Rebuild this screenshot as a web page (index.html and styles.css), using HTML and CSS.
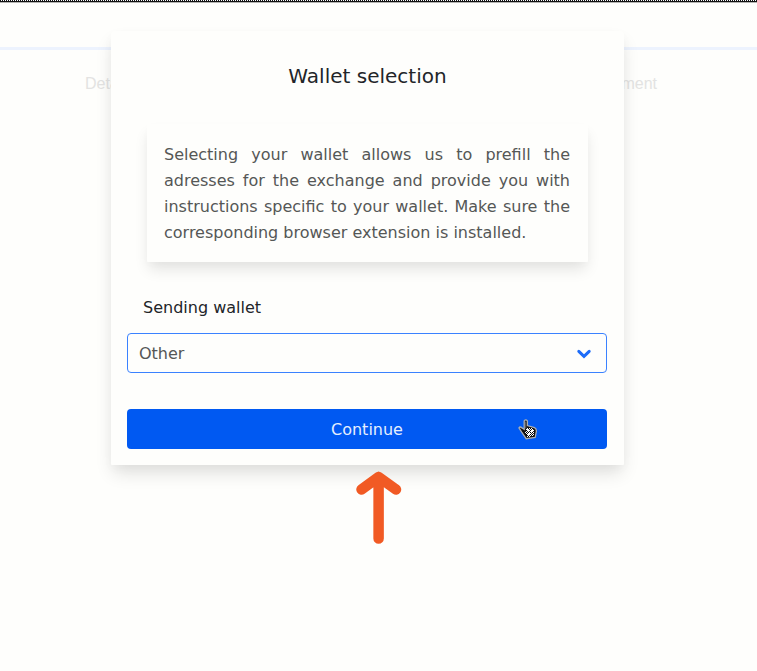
FILE: index.html
```
<!DOCTYPE html>
<html lang="en">
<head>
<meta charset="utf-8">
<title>Wallet selection</title>
<link rel="stylesheet" href="styles.css">
</head>
<body>
<header class="edge"></header>
<div class="track"></div>
<div class="steps"><span>Details</span><span>Payment</span></div>
<main class="card">
  <h1>Wallet selection</h1>
  <p class="info">Selecting your wallet allows us to prefill the adresses for the exchange and provide you with instructions specific to your wallet. Make sure the corresponding browser extension is installed.</p>
  <div class="label">Sending wallet</div>
  <div class="select"><span>Other</span>
    <svg width="16" height="12" viewBox="0 0 16 12"><path d="M2.8 3.4 8 8.4l5.2-5" fill="none" stroke="#1d6cf8" stroke-width="3" stroke-linecap="round"/></svg>
  </div>
  <button class="continue">Continue</button>
</main>
<svg class="arrow" width="46" height="74" viewBox="0 0 46 74"><path d="M22.6 67.5V6M5.5 18.5 22.6 6 40 18.5" fill="none" stroke="#f15a24" stroke-width="10.5" stroke-linecap="round" stroke-linejoin="round"/></svg>
<svg class="cursor" width="20" height="22" viewBox="0 0 20 22">
  <defs><pattern id="grain" width="2" height="2" patternUnits="userSpaceOnUse"><rect width="2" height="2" fill="#fff"/><rect width="1" height="1" fill="#000"/><rect x="1" y="1" width="1" height="1" fill="#222"/></pattern></defs>
  <path d="M6.2 3Q7.8.8 9.4 3v4.5l7 2.2q2 .8 2 3.3l-1.2 6.5-9 1.2-4.7-6.8-2.5-4q1-1.8 3 0l2.2 1.4z" fill="#111" stroke="#a9adb3" stroke-width="1.3"/>
  <path d="M7.8 3.5v7" stroke="#777" stroke-width="1"/>
  <path d="M9.5 9.5 16.5 11.2 16 18 9.5 18.8 7 14z" fill="url(#grain)" shape-rendering="crispEdges"/>
  <path d="M9 11h2v2H9zM13 12h2v2h-2zM10 15h2v2h-2z" fill="#fff"/>
</svg>
</body>
</html>
```
FILE: styles.css
```
* { box-sizing: border-box; }
body {
  margin: 0;
  height: 671px;
  position: relative;
  overflow: hidden;
  background: #fefefc;
  color: #222529;
  font: 16px/26px "DejaVu Sans", sans-serif;
}
.edge {
  height: 3px;
  background: linear-gradient(transparent 1px, #111 1px 2px, #b5b5b2 2px), repeating-linear-gradient(90deg, #111 0 1px, #fff 1px 2px);
}
.track { height: 3px; margin-top: 44px; margin-bottom: -19px; background: #edf3fe; }
.steps {
  display: flex;
  justify-content: space-between;
  margin: 40px 100px -66px 85px;
  font-family: "Liberation Sans", sans-serif;
  color: #e3e3e2;
}
.card {
  position: relative;
  width: 513px;
  height: 434px;
  margin-left: 111px;
  padding: 32px 16px 16px;
  background: #fefefc;
  border-radius: 4px 4px 1px 1px;
  box-shadow: 0 10px 18px -2px rgba(10,10,10,.12), 0 4px 12px rgba(10,10,10,.025);
}
h1 { margin: 0 0 35px; font-size: 20px; line-height: 26px; font-weight: 400; text-align: center; }
.info {
  margin: 0 20px 33px;
  padding: 18px 18px 16px 17px;
  height: 138px;
  color: #555756;
  text-align: justify;
  border-radius: 4px 4px 1px 1px;
  box-shadow: 0 9px 15px -2px rgba(10,10,10,.11), 0 3px 8px rgba(10,10,10,.015);
}
.label { margin: 0 16px 12px; }
.select {
  display: flex;
  align-items: center;
  justify-content: space-between;
  width: 480px;
  height: 40px;
  padding: 1px 14px 0 11px;
  color: #555756;
  border: 1px solid #3b82ff;
  border-radius: 4px;
}
.continue {
  display: block;
  width: 480px;
  height: 40px;
  margin-top: 36px;
  padding: 2px 0 0;
  border: 0;
  border-radius: 4px;
  background: #0059f2;
  color: #e4eefe;
  font: inherit;
}
.arrow { position: absolute; left: 356px; top: 471px; }
.cursor { position: absolute; left: 518px; top: 418px; }
```
